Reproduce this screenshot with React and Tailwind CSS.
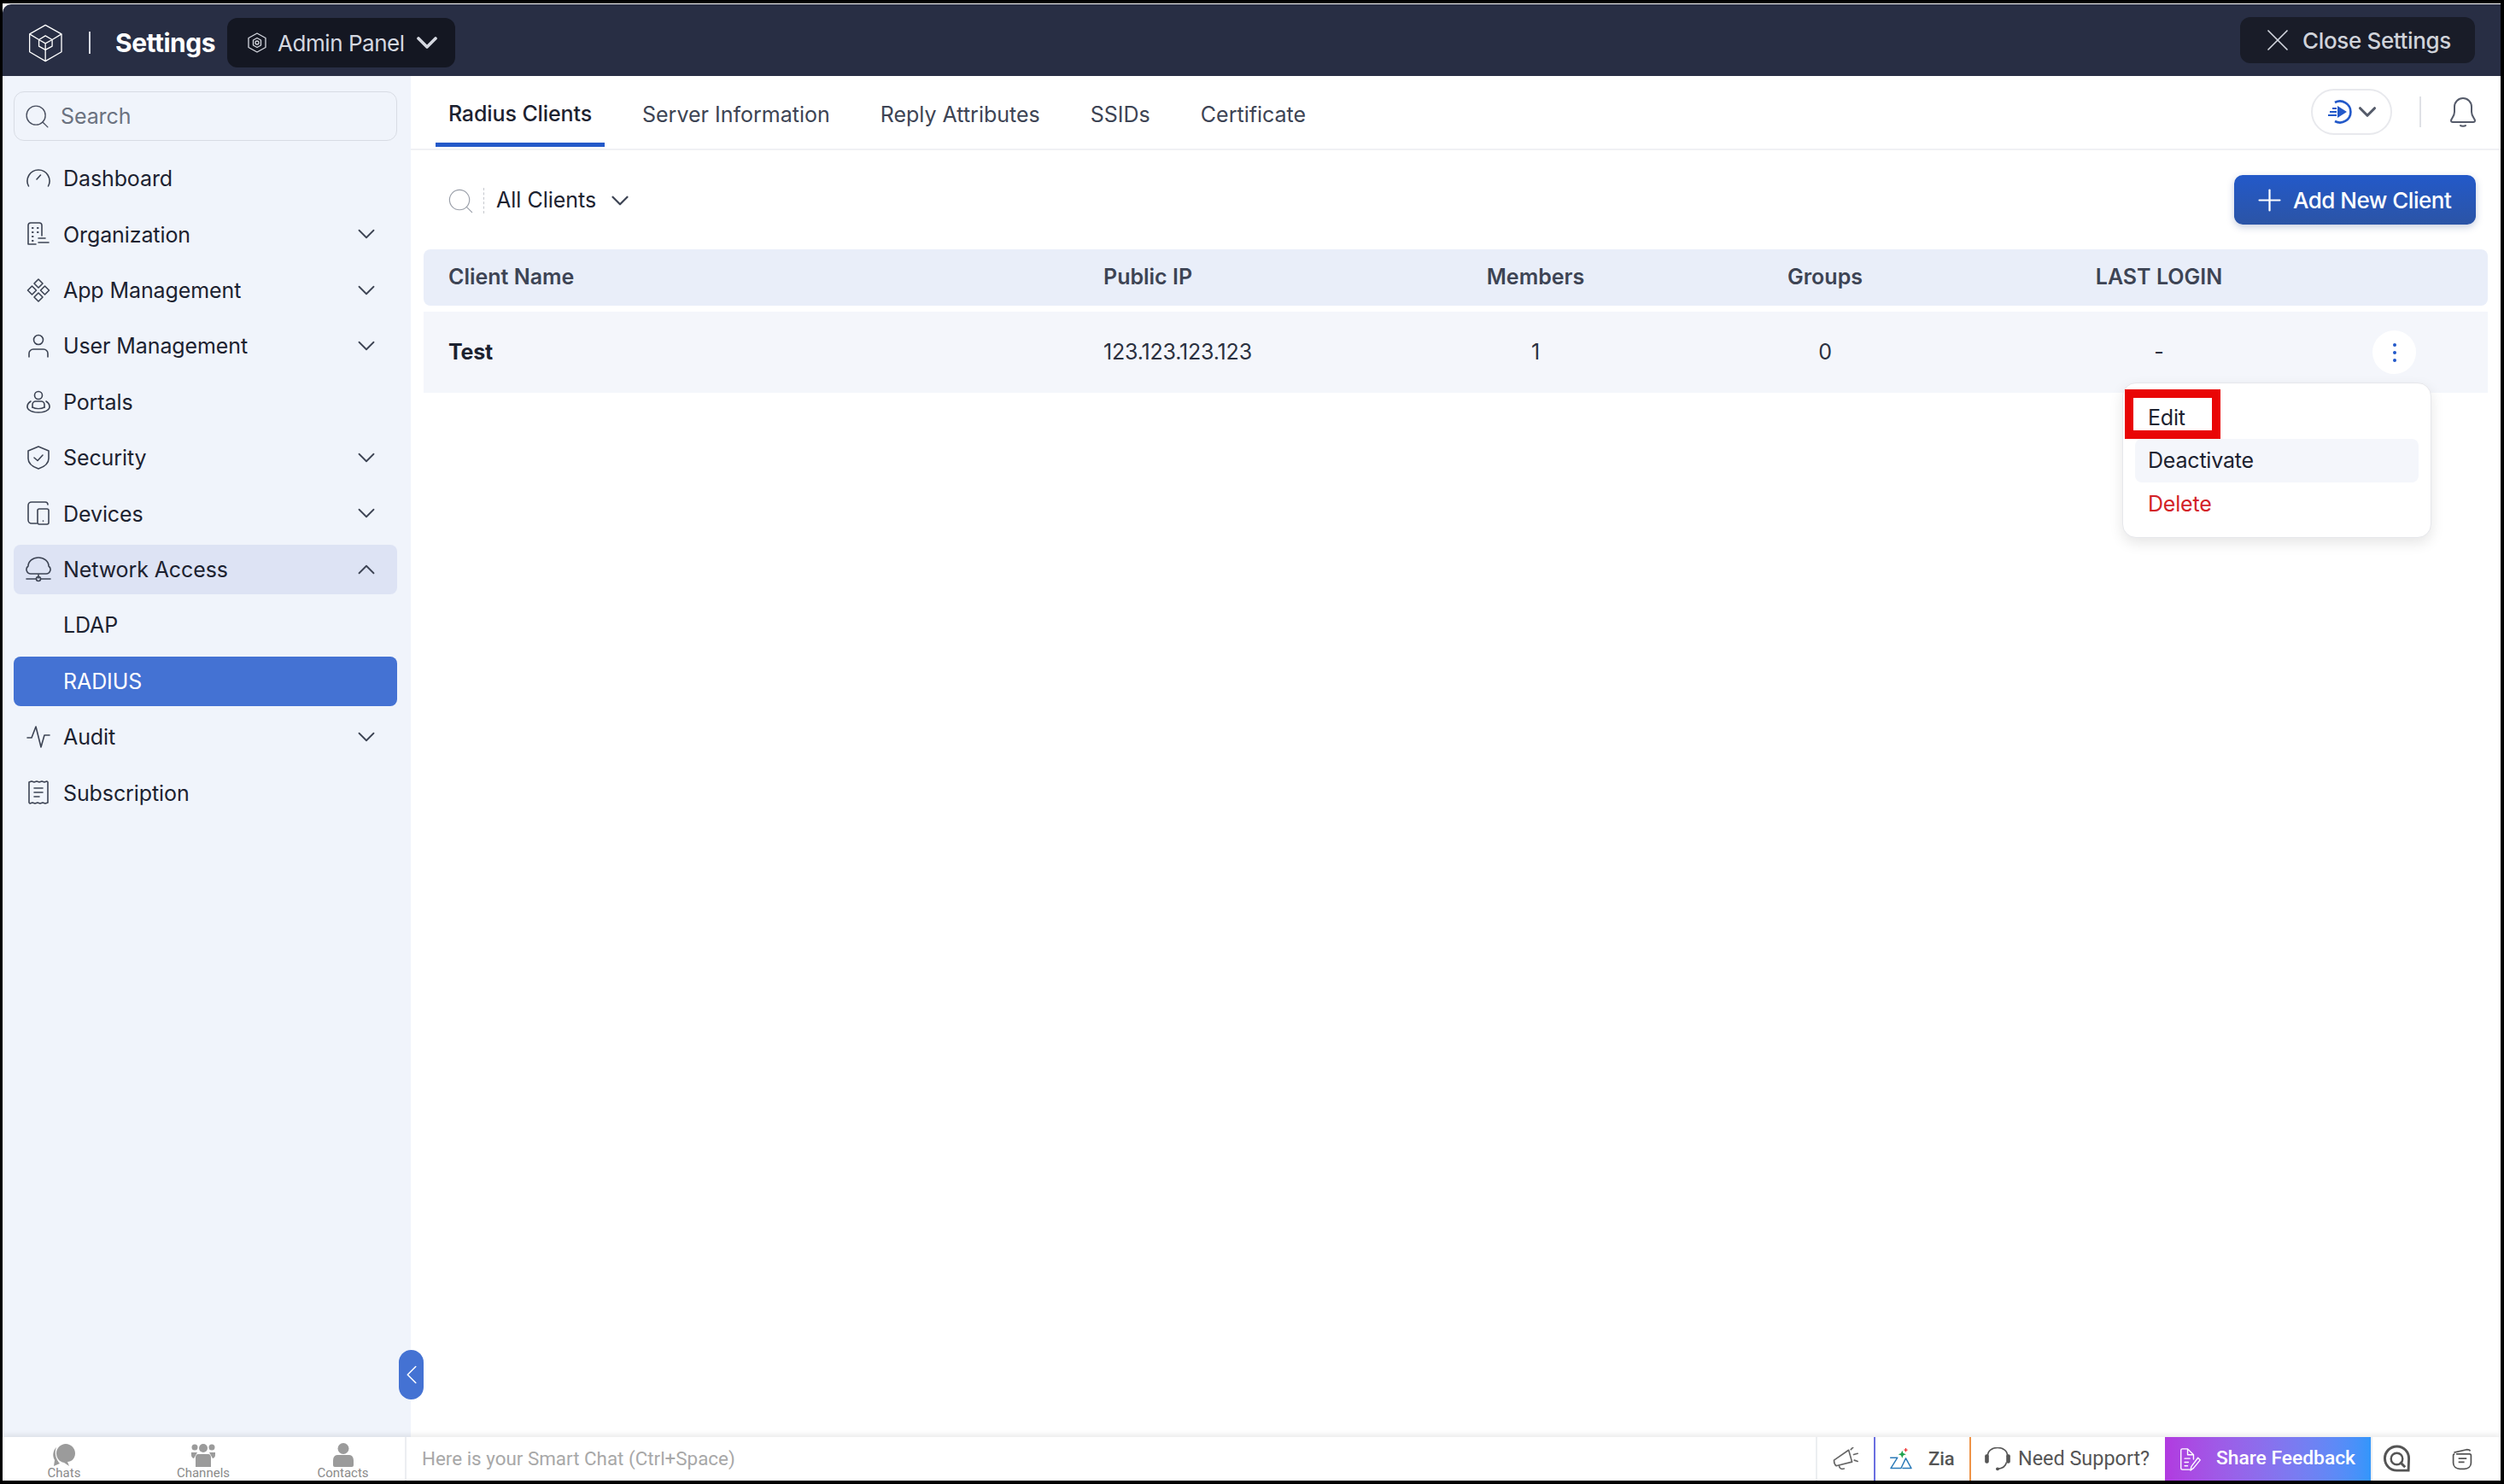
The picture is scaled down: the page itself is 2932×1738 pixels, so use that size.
import React from 'react';
import { ChevronDown, ChevronUp, ChevronLeft, X, Plus, Search } from 'lucide-react';

const ic = { fill: 'none', stroke: 'currentColor', strokeWidth: 1.5, strokeLinecap: 'round', strokeLinejoin: 'round' };

const Logo = () => (
    <svg width="39" height="45" viewBox="40 38 118 132" fill="none" stroke="white" strokeWidth="4" strokeLinejoin="round">
        <path d="M98 40 L155 72 V135 L98 168 L42 135 V72 Z" />
        <path d="M42 72 L75 92 M155 72 L122 92 M98 168 V128" />
        <path d="M98 78 L122 92 V115 L98 128 L75 115 V92 Z" />
        <path d="M75 92 L98 105 L122 92 M98 105 V128" />
    </svg>
);

const GearHex = () => (
    <svg width="22" height="24" viewBox="0 0 22 24" fill="none" stroke="#d5d8e0" strokeWidth="1.3" strokeLinejoin="round">
        <path d="M11 1 L21 6.5 V17.5 L11 23 L1 17.5 V6.5 Z" />
        <circle cx="11" cy="12" r="2" />
        <path d="M11 6.5 L15.5 9 V15 L11 17.5 L6.5 15 V9 Z" />
    </svg>
);

const NavIcon = ({ name }) => {
    const paths = {
        dashboard: <><path d="M3.5 24 A13 13 0 1 1 26.5 24" /><path d="M13 16 L17.5 11" /></>,
        org: <><path d="M12 27 H3 V5 A3 3 0 0 1 6 2 H16 A3 3 0 0 1 19 5 V17" /><path d="M8 8 H8.5 M14 8 H14.5 M8 13 H8.5 M14 13 H14.5 M8 18 H8.5 M8 23 H8.5" strokeWidth="2.2" /><path d="M15 20 H23 M15 25 H27" /></>,
        app: <><path d="M15 2 L20 7 L15 12 L10 7 Z" /><path d="M7.5 10 L12.5 15 L7.5 20 L2.5 15 Z" /><path d="M22.5 10 L27.5 15 L22.5 20 L17.5 15 Z" /><path d="M15 18 L20 23 L15 28 L10 23 Z" /></>,
        user: <><circle cx="15" cy="8" r="5.5" /><path d="M4 28 V24 A5 5 0 0 1 9 19 H21 A5 5 0 0 1 26 24 V28" /></>,
        portals: <><circle cx="15" cy="7" r="4.5" /><path d="M8 21 V18 A4 4 0 0 1 12 14 H18 A4 4 0 0 1 22 18 V21" /><path d="M6 14 C1 17 1 22 4 24 C9 28 21 28 26 24 C29 22 29 17 24 14" /><path d="M8 21 C12 23 18 23 22 21" /></>,
        security: <><path d="M15 2 L27 7 V16 C27 22 21 26 15 28 C9 26 3 22 3 16 V7 Z" /><path d="M10 15 L14 18.5 L20 12" /></>,
        devices: <><path d="M13 27 H7 A4 4 0 0 1 3 23 V6 A4 4 0 0 1 7 2 H23 A3 3 0 0 1 26 5" /><rect x="14" y="10" width="13" height="18" rx="2" /><path d="M20.5 24 V24.2" /></>,
        network: <><path d="M9 20 H6 A5 5 0 0 1 3 11 A12 10 0 0 1 27 11 A5 5 0 0 1 24 20 H9" /><path d="M15 21 V25 M1 26 H12 M18 26 H29" /><circle cx="15" cy="26" r="2.5" /></>,
        audit: <><path d="M2 16 H7 L12 3 L18 27 L22 13 H28" /></>,
        subscription: <><path d="M4 3 L7 2 L10 3 L13 2 L16 3 L19 2 L22 3 L25 2 L26 3 V27 L23 28 L20 27 L17 28 L14 27 L11 28 L8 27 L5 28 L4 27 Z" /><path d="M10 10 H20 M10 15 H20 M10 20 H16" /></>,
    };
    return (
        <svg width="30" height="30" viewBox="0 0 30 30" {...ic} strokeWidth="1.6" className="shrink-0 text-[#3d4454]">
            {paths[name]}
        </svg>
    );
};

const navItems = [
    { label: 'Dashboard', icon: 'dashboard' },
    { label: 'Organization', icon: 'org', arrow: true },
    { label: 'App Management', icon: 'app', arrow: true },
    { label: 'User Management', icon: 'user', arrow: true },
    { label: 'Portals', icon: 'portals' },
    { label: 'Security', icon: 'security', arrow: true },
    { label: 'Devices', icon: 'devices', arrow: true },
    { label: 'Network Access', icon: 'network', open: true },
    { label: 'LDAP' },
    { label: 'RADIUS', active: true },
    { label: 'Audit', icon: 'audit', arrow: true },
    { label: 'Subscription', icon: 'subscription' },
];

const NavRow = ({ item }) => {
    const bg = item.active ? 'bg-[#4472d3] text-white' : item.open ? 'bg-[#dde3f4] text-[#1c2230]' : 'text-[#1c2230]';
    return (
        <div className={`flex items-center h-[58px] rounded-[8px] pl-[14px] pr-[19px] ${bg}`}>
            <div className="w-[44px] shrink-0 flex items-center">{item.icon && <NavIcon name={item.icon} />}</div>
            <span className="flex-1 pt-[2px] text-[25px] tracking-[-0.1px]">{item.label}</span>
            {item.arrow && <ChevronDown size={34} strokeWidth={1.3} className="text-[#3d4454]" />}
            {item.open && <ChevronUp size={34} strokeWidth={1.3} className="text-[#3d4454]" />}
        </div>
    );
};

const Sidebar = () => (
    <aside className="w-[478px] shrink-0 bg-[#f0f4fb] pl-[13px] pr-[16px] pt-[18px]">
        <div className="flex items-center h-[58px] rounded-[12px] border border-[#d8dce4] pl-[10px]">
            <Search size={33} strokeWidth={1} className="text-[#4a5060]" />
            <span className="ml-[11px] pt-[2px] text-[25px] tracking-[-0.1px] text-[#6b7280]">Search</span>
        </div>
        <nav className="mt-[15px] flex flex-col gap-[7.4px]">
            {navItems.map((item) => <NavRow key={item.label} item={item} />)}
        </nav>
    </aside>
);

const Header = () => (
    <header className="h-[84px] shrink-0 flex items-center justify-between bg-[#282e44] rounded-tl-[10px] pl-[31px] pr-[30px] pt-[6px]">
        <div className="flex items-center">
            <Logo />
            <div className="ml-[31px] w-[2px] h-[26px] bg-[#d5d8e0]" />
            <span className="ml-[29px] w-[117px] text-[30px] font-bold tracking-[-0.5px] text-white">Settings</span>
            <div className="ml-[14px] h-[58px] w-[267px] rounded-[12px] bg-[#141722] flex items-center pl-[24px]">
                <GearHex />
                <span className="ml-[13px] text-[26px] tracking-[-0.45px] text-[#d5d8e0]">Admin Panel</span>
                <ChevronDown size={40} strokeWidth={2.2} className="ml-[6px] text-[#d5d8e0]" />
            </div>
        </div>
        <div className="h-[54px] w-[275px] rounded-[12px] bg-[#191c28] flex items-center pl-[22px] mb-[6px]">
            <X size={44} strokeWidth={0.9} className="text-[#d5d8e0]" />
            <span className="ml-[7px] text-[26px] tracking-[-0.35px] font-medium text-[#d0d3da]">Close Settings</span>
        </div>
    </header>
);

const tabs = ['Server Information', 'Reply Attributes', 'SSIDs', 'Certificate'];

const TabBar = () => (
    <div className="h-[87px] shrink-0 flex items-stretch justify-between border-b-2 border-[#f0f1f4] pl-[29px]">
        <div className="flex items-stretch">
            <div className="h-[83px] w-[198px] flex items-center justify-center border-b-[5px] border-[#2359c9] text-[25px] tracking-[-0.1px] text-[#1c2230] pt-[12px] font-medium">Radius Clients</div>
            <div className="flex items-center gap-[59px] ml-[44px] h-[83px] pt-[8px]">
                {tabs.map((t) => <span key={t} className="text-[25px] text-[#3d4454]">{t}</span>)}
            </div>
        </div>
        <div className="flex items-center h-[83px] pr-[28px]">
            <div className="w-[95px] h-[54px] rounded-full border-2 border-[#e8e9ed] flex items-center pl-[17px]">
                <svg width="30" height="28" viewBox="0 0 30 28" fill="none">
                    <path d="M9 3 A12.5 12.5 0 1 1 9 25" stroke="#2359c9" strokeWidth="2.6" />
                    <path d="M12 7 L23 14 L12 21 Z" fill="#2359c9" />
                    <path d="M6 10 H11 M3 14 H11 M1 18 H11" stroke="#2359c9" strokeWidth="1.8" />
                </svg>
                <ChevronDown size={34} strokeWidth={2.2} className="text-[#555b6a]" />
            </div>
            <div className="w-[2px] h-[36px] bg-[#dfe1e6] ml-[32px]" />
            <svg width="32" height="36" viewBox="0 0 32 36" fill="none" stroke="#555b6a" strokeWidth="2" strokeLinejoin="round" strokeLinecap="round" className="ml-[33px]">
                <path d="M2 28 C2 26 6 24 6 18 V12 A10 10 0 0 1 26 12 V18 C26 24 30 26 30 28 C30 29 29 30 28 30 H4 C3 30 2 29 2 28 Z" />
                <path d="M13 34 C14 35 18 35 19 34" />
            </svg>
        </div>
    </div>
);

const Toolbar = () => (
    <div className="h-[116px] shrink-0 flex items-center justify-between pl-[41px] pr-[29px]">
        <div className="flex items-center pt-[2px]">
            <Search size={35} strokeWidth={0.8} className="text-[#9a9fa9]" />
            <div className="ml-[9px] h-[30px] border-l border-dashed border-[#c5c8ce]" />
            <span className="ml-[14px] text-[25px] text-[#1c2230]">All Clients</span>
            <ChevronDown size={34} strokeWidth={1.6} className="ml-[11px] text-[#3d4454]" />
        </div>
        <div className="h-[58px] w-[283px] rounded-[10px] bg-gradient-to-b from-[#2359c9] to-[#2b54a6] shadow-[0_3px_8px_rgba(30,60,130,0.25)] flex items-center pl-[21px]">
            <Plus size={41} strokeWidth={1.3} className="text-white" />
            <span className="ml-[7px] text-[26px] tracking-[-0.5px] font-medium text-white">Add New Client</span>
        </div>
    </div>
);

const colClass = 'grid grid-cols-[796px_400px_212px_466px_316px_1fr] items-center';

const ClientTable = () => (
    <div className="pr-[15px] pl-[15px]">
        <div className={`${colClass} h-[66px] rounded-[8px] bg-[#e9eef9] text-[25px] font-semibold text-[#3d4454]`}>
            <span className="pl-[29px]">Client Name</span>
            <span>Public IP</span>
            <span className="text-center">Members</span>
            <span className="text-center">Groups</span>
            <span className="text-center">LAST LOGIN</span>
            <span />
        </div>
        <div className={`${colClass} relative h-[95px] mt-[7px] bg-[#f4f6fb] text-[25px] tracking-[-0.2px] text-[#2b3140]`}>
            <span className="pl-[29px] font-bold text-[#1c2230]">Test</span>
            <span>123.123.123.123</span>
            <span className="text-center">1</span>
            <span className="text-center">0</span>
            <span className="text-center">-</span>
            <div className="pl-[92px]">
                <div className="w-[51px] h-[51px] rounded-full bg-white flex flex-col items-center justify-center gap-[5px]">
                    <span className="w-[4px] h-[4px] rounded-full bg-[#2359c9]" />
                    <span className="w-[4px] h-[4px] rounded-full bg-[#2359c9]" />
                    <span className="w-[4px] h-[4px] rounded-full bg-[#2359c9]" />
                </div>
            </div>
            <RowMenu />
        </div>
    </div>
);

const RowMenu = () => (
    <div className="absolute left-[1989px] top-[83px] w-[362px] h-[182px] rounded-[16px] bg-white border border-[#e6e7eb] shadow-[0_6px_16px_rgba(0,0,0,0.1)] pt-[13px] px-[14px] z-10 flex flex-col">
        <div className="h-[52px] flex items-center pl-[15px] pt-[3px] text-[25px] tracking-[-0.2px] text-[#1c2230]">Edit</div>
        <div className="h-[51px] flex items-center pl-[15px] pt-[1px] rounded-[8px] bg-[#f4f6fb] text-[25px] tracking-[-0.2px] text-[#1c2230]">Deactivate</div>
        <div className="h-[51px] flex items-center pl-[15px] pt-[1px] text-[25px] tracking-[-0.2px] text-[#d32228]">Delete</div>
        <div className="absolute left-[2px] top-[7px] w-[112px] h-[58px] border-[10px] border-[#e90606]" />
    </div>
);

const dockTabs = [
    {
        label: 'Chats',
        shape: <><path d="M16 1 C22 1 27 6 27 12 C27 18 23 22 18 22 L20 27 L14 23 C8 22 5 17 5 12 C5 6 10 1 16 1 Z" /><path d="M5 5 C1 9 0 15 3 20 L2 27 L9 24 C5 20 2 12 5 5 Z" /></>,
    },
    {
        label: 'Channels',
        shape: <><circle cx="14" cy="6" r="5" /><circle cx="4" cy="5" r="3.5" /><circle cx="24" cy="5" r="3.5" /><path d="M8 13 H20 C22 13 23 15 23 17 V28 H5 V17 C5 15 6 13 8 13 Z" /><path d="M0 11 H7 L3 18 Q0 17 0 14 Z M21 11 H28 V14 Q28 17 25 18 Z" /></>,
    },
    {
        label: 'Contacts',
        shape: <><circle cx="14" cy="6.5" r="6.5" /><path d="M7 14 H21 C25 14 26 18 26 21 V26 Q26 28 24 28 H4 Q2 28 2 26 V21 C2 18 3 14 7 14 Z" /></>,
    },
];

const BottomBar = () => (
    <footer className="relative h-[51px] shrink-0 flex items-stretch bg-white shadow-[0_-3px_6px_rgba(0,0,0,0.08)] font-['Roboto',sans-serif]">
        <div className="w-[473px] shrink-0 grid grid-cols-[144px_182px_1fr] border-r-2 border-[#eceef1]">
            {dockTabs.map(({ label, shape }) => (
                <div key={label} className="flex flex-col items-center justify-start text-[15px] leading-[14px] text-[#8a8a8a] pt-[7px]">
                    <svg width="28" height="28" viewBox="0 0 28 28" fill="#9b9b9b">{shape}</svg>
                    <span>{label}</span>
                </div>
            ))}
        </div>
        <div className="flex-1 flex items-center pl-[18px] text-[22.4px] text-[#a8a8a8]">Here is your Smart Chat (Ctrl+Space)</div>
        <div className="flex items-stretch">
            <div className="w-[68px] border-l-2 border-[#eceef1] flex items-center justify-center">
                <svg width="30" height="28" viewBox="0 0 90 85" {...ic} strokeWidth="5" className="text-[#666]">
                    <path d="M4 46 L56 10 L68 52 L12 66 Q4 60 4 46 Z" />
                    <path d="M22 66 Q24 80 40 76" />
                    <path d="M64 8 L72 0 M74 26 L88 22 M76 46 L88 50" />
                </svg>
            </div>
            <div className="w-[112px] border-l-2 border-[#6a6ee0] flex items-center pl-[17px]">
                <svg width="26" height="25" viewBox="0 0 80 76" fill="none" stroke="#2a7ab8" strokeWidth="4.5" strokeLinejoin="round" strokeLinecap="round">
                    <path d="M2 34 H27 L3 72 H40 L57 36 L77 72 H46" />
                    <path d="M44 8 L48 18 L58 22 L48 26 L44 36 L40 26 L30 22 L40 18 Z" fill="#1da14e" stroke="none" />
                    <path d="M57 1 V11 M52 6 H62" stroke="#e33" strokeWidth="4" />
                </svg>
                <span className="ml-[19px] text-[22px] font-medium text-[#555]">Zia</span>
            </div>
            <div className="w-[229px] border-l-2 border-[#ee9347] flex items-center pl-[16px] text-[#555]">
                <svg width="30" height="28" viewBox="0 0 90 85" fill="none" stroke="#555" strokeWidth="5" strokeLinecap="round">
                    <path d="M10 30 C10 -8 80 -8 80 30" />
                    <rect x="0" y="25" width="14" height="32" rx="6" fill="#555" stroke="none" />
                    <rect x="76" y="25" width="14" height="32" rx="6" fill="#555" stroke="none" />
                    <path d="M76 55 C74 68 60 75 45 77" />
                    <circle cx="45" cy="77" r="6" fill="#555" stroke="none" />
                </svg>
                <span className="ml-[9px] text-[23.4px]">Need Support?</span>
            </div>
            <div className="w-[241px] bg-gradient-to-r from-[#b13ae0] to-[#3296fb] flex items-center pl-[17px] text-white">
                <svg width="26" height="28" viewBox="0 0 30 32" fill="none" stroke="white" strokeWidth="1.6" strokeLinejoin="round" strokeLinecap="round">
                    <path d="M14 30 H4 A2 2 0 0 1 2 28 V4 A2 2 0 0 1 4 2 H11 L19 10 V16 M11 2 V10 H19" />
                    <path d="M7 15 H14 M7 20 H12 M7 25 H11" />
                    <path d="M28 17 L19 28 L15 31 L16 26 L25 14 Z" />
                </svg>
                <span className="ml-[17px] text-[22.8px] font-medium">Share Feedback</span>
            </div>
            <div className="w-[93px] border-l-2 border-[#eceef1] flex items-center justify-center pr-[34px]">
                <svg width="33" height="33" viewBox="0 0 34 34" fill="none" stroke="#555" strokeWidth="3">
                    <path d="M31 31 H17 A14.5 14.5 0 1 1 31.5 17 Z" />
                    <circle cx="17" cy="17" r="7" strokeWidth="2.5" />
                    <path d="M21 21 L27 27" />
                </svg>
            </div>
            <div className="w-[59px] flex items-center">
                <svg width="28" height="26" viewBox="0 0 28 30" fill="none" stroke="#555" strokeWidth="2" strokeLinejoin="round">
                    <path d="M3 6 L20 2 C22 2 24 2 25 4 M6 8 H24 A2 2 0 0 1 26 10 V20 C26 25 22 28 17 28 H11 C6 28 2 25 2 20 V10 A2 2 0 0 1 4 8" />
                    <path d="M9 14 H20 M9 19 H17" />
                </svg>
            </div>
        </div>
    </footer>
);

export default function App() {
    return (
        <div className="w-[2932px] h-[1738px] bg-black pt-[4px] pl-[3px] pr-[4px] pb-[4px] font-['Inter',sans-serif] overflow-hidden">
            <div className="relative w-full h-full bg-white pt-[1px] flex flex-col overflow-hidden">
                <Header />
                <div className="flex-1 flex min-h-0">
                    <Sidebar />
                    <main className="flex-1 min-w-0 relative">
                        <TabBar />
                        <Toolbar />
                        <ClientTable />
                    </main>
                </div>
                <BottomBar />
                <div className="absolute left-[464px] top-[1577px] w-[29px] h-[58px] rounded-full bg-[#4472d3] flex items-center justify-center">
                    <ChevronLeft size={38} strokeWidth={1} className="text-white shrink-0" />
                </div>
            </div>
        </div>
    );
}
